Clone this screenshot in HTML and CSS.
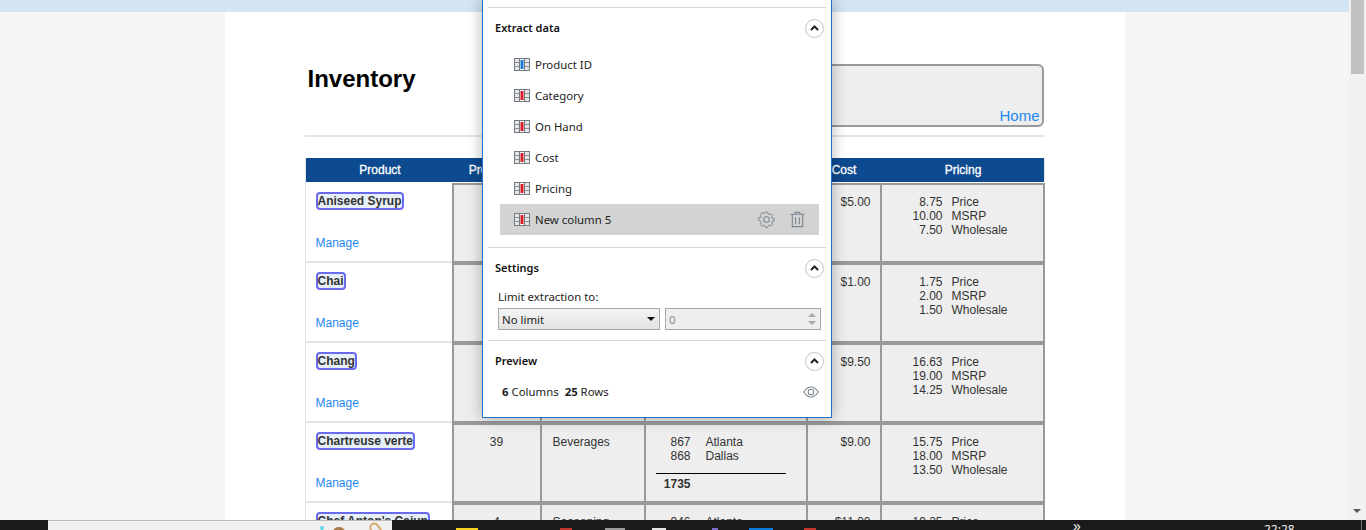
FILE: index.html
```html
<!DOCTYPE html>
<html>
<head>
  <title>Inventory</title>
  <link rel="stylesheet" href="styles.css">
</head>
<body>

<svg class="defs" width="0" height="0">
  <symbol id="col-icon" viewBox="0 0 16 13">
    <rect x="0.5" y="0.5" width="15" height="12" fill="#e4e6e8" stroke="#767b82"/>
    <rect x="5" y="1" width="6" height="11" fill="#fff"/>
    <path d="M1 4.500H5M1 8.500H5M11 4.500H15M11 8.500H15" stroke="#8d9197"/>
    <path d="M5.500 1V12M10.500 1V12" stroke="#767b82"/>
    <rect x="6.500" y="2" width="3" height="9" fill="currentColor"/>
  </symbol>
  <symbol id="chevron" viewBox="0 0 19 19">
    <circle cx="9.500" cy="9.500" r="9" fill="#fff" stroke="#c4c4c4"/>
    <path d="M6 11L9.500 7.500L13 11" fill="none" stroke="#222" stroke-width="2"/>
  </symbol>
</svg>

<div class="screen">
  <div class="viewport">
    <div class="page-scroll">
      <div class="top-bar"></div>
      <div class="sheet">
        <div class="head">
          <h1>Inventory</h1>
          <div class="head-box"><a href="#">Home</a></div>
        </div>
        <hr class="head-rule">

        <table class="inventory">
          <colgroup>
            <col class="c-product"><col class="c-id"><col class="c-cat"><col class="c-hand"><col class="c-cost"><col class="c-price">
          </colgroup>
          <thead>
            <tr><th>Product</th><th>Product ID</th><th>Category</th><th>On Hand</th><th>Cost</th><th>Pricing</th></tr>
          </thead>
          <tbody>
            <tr>
              <td class="name"><span class="pill">Aniseed Syrup</span><a class="manage" href="#">Manage</a></td>
              <td class="data center">3</td>
              <td class="data cat">Condiments</td>
              <td class="data hand">
                <div class="stock"><span>13</span><span>Atlanta</span></div>
                <div class="total"><b>13</b></div>
              </td>
              <td class="data cost">$5.00</td>
              <td class="data price">
                <div class="tier"><span>8.75</span><span>Price</span></div>
                <div class="tier"><span>10.00</span><span>MSRP</span></div>
                <div class="tier"><span>7.50</span><span>Wholesale</span></div>
              </td>
            </tr>
            <tr>
              <td class="name"><span class="pill">Chai</span><a class="manage" href="#">Manage</a></td>
              <td class="data center">1</td>
              <td class="data cat">Beverages</td>
              <td class="data hand">
                <div class="stock"><span>39</span><span>Atlanta</span></div>
                <div class="total"><b>39</b></div>
              </td>
              <td class="data cost">$1.00</td>
              <td class="data price">
                <div class="tier"><span>1.75</span><span>Price</span></div>
                <div class="tier"><span>2.00</span><span>MSRP</span></div>
                <div class="tier"><span>1.50</span><span>Wholesale</span></div>
              </td>
            </tr>
            <tr>
              <td class="name"><span class="pill">Chang</span><a class="manage" href="#">Manage</a></td>
              <td class="data center">2</td>
              <td class="data cat">Beverages</td>
              <td class="data hand">
                <div class="stock"><span>17</span><span>Atlanta</span></div>
                <div class="total"><b>17</b></div>
              </td>
              <td class="data cost">$9.50</td>
              <td class="data price">
                <div class="tier"><span>16.63</span><span>Price</span></div>
                <div class="tier"><span>19.00</span><span>MSRP</span></div>
                <div class="tier"><span>14.25</span><span>Wholesale</span></div>
              </td>
            </tr>
            <tr>
              <td class="name"><span class="pill">Chartreuse verte</span><a class="manage" href="#">Manage</a></td>
              <td class="data center">39</td>
              <td class="data cat">Beverages</td>
              <td class="data hand">
                <div class="stock"><span>867</span><span>Atlanta</span></div>
                <div class="stock"><span>868</span><span>Dallas</span></div>
                <div class="total"><b>1735</b></div>
              </td>
              <td class="data cost">$9.00</td>
              <td class="data price">
                <div class="tier"><span>15.75</span><span>Price</span></div>
                <div class="tier"><span>18.00</span><span>MSRP</span></div>
                <div class="tier"><span>13.50</span><span>Wholesale</span></div>
              </td>
            </tr>
            <tr>
              <td class="name"><span class="pill">Chef Anton's Cajun</span><a class="manage" href="#">Manage</a></td>
              <td class="data center">4</td>
              <td class="data cat">Seasoning</td>
              <td class="data hand">
                <div class="stock"><span>946</span><span>Atlanta</span></div>
              </td>
              <td class="data cost">$11.00</td>
              <td class="data price">
                <div class="tier"><span>19.25</span><span>Price</span></div>
              </td>
            </tr>
          </tbody>
        </table>
      </div>

      <div class="panel">
        <section class="section first">
          <div class="section-head">
            <span>Extract data</span>
            <svg class="toggle"><use href="#chevron"/></svg>
          </div>
          <ul class="columns">
            <li><svg class="col-icon key"><use href="#col-icon"/></svg>Product ID</li>
            <li><svg class="col-icon"><use href="#col-icon"/></svg>Category</li>
            <li><svg class="col-icon"><use href="#col-icon"/></svg>On Hand</li>
            <li><svg class="col-icon"><use href="#col-icon"/></svg>Cost</li>
            <li><svg class="col-icon"><use href="#col-icon"/></svg>Pricing</li>
            <li class="selected">
              <svg class="col-icon"><use href="#col-icon"/></svg>New column 5
              <span class="row-tools">
                <svg class="tool" viewBox="0 0 18 18" fill="none" stroke="#7d8790" stroke-width="1.100">
                  <path d="M7.600 1.500h2.800l.4 2.200 1.300.6 1.900-1.200 2 2-1.200 1.900.5 1.300 2.200.4v2.800l-2.200.4-.5 1.300 1.200 1.900-2 2-1.900-1.200-1.300.5-.4 2.200H7.600l-.4-2.200-1.300-.5-1.900 1.200-2-2 1.200-1.900-.5-1.300L.5 10.400V7.600l2.200-.4.5-1.300L2 4l2-2 1.900 1.200 1.300-.5z" transform="translate(.4 -.2) scale(.95)"/>
                  <circle cx="9" cy="9" r="3"/>
                </svg>
                <svg class="tool" viewBox="0 0 18 18" fill="none" stroke="#7d8790" stroke-width="1.200">
                  <path d="M1.500 3.500H16.500M6.500 3.500V1.500H11.500V3.500M3.500 3.500V16.500H14.500V3.500M7 6.500V14M11 6.500V14"/>
                </svg>
              </span>
            </li>
          </ul>
        </section>

        <section class="section">
          <div class="section-head">
            <span>Settings</span>
            <svg class="toggle"><use href="#chevron"/></svg>
          </div>
          <div class="limit-label">Limit extraction to:</div>
          <div class="limit-row">
            <div class="limit-select">No limit<span class="caret"></span></div>
            <div class="limit-number">0
              <span class="spin"><i class="up"></i><i class="down"></i></span>
            </div>
          </div>
        </section>

        <section class="section">
          <div class="section-head">
            <span>Preview</span>
            <svg class="toggle"><use href="#chevron"/></svg>
          </div>
          <div class="summary">
            <span><b>6</b> Columns&nbsp; <b>25</b> Rows</span>
            <svg class="eye" viewBox="0 0 16 12" fill="none" stroke="#7d8790" stroke-width="1.100">
              <path d="M.7 6C3 2.600 5.400 1 8 1s5 1.600 7.300 5C13 9.400 10.600 11 8 11S3 9.400.7 6z"/>
              <circle cx="8" cy="6" r="2.800"/>
            </svg>
          </div>
        </section>
      </div>
    </div>

    <div class="scrollbar">
      <div class="thumb"></div>
      <div class="arrow-down"></div>
    </div>
  </div>

  <div class="taskbar">
    <div class="task-window">
      <span class="dot"></span>
      <span class="clip-a"></span>
      <span class="clip-b"></span>
    </div>
    <span class="tray t-yellow"></span>
    <span class="tray t-red"></span>
    <span class="tray t-grey"></span>
    <span class="tray t-light"></span>
    <span class="tray t-purple"></span>
    <span class="tray t-blue"></span>
    <span class="tray t-red2"></span>
    <span class="more">»</span>
    <span class="clock">22:28</span>
    <span class="show-desktop"></span>
  </div>
</div>

</body>
</html>
```

FILE: styles.css
```css
* {
  box-sizing: border-box;
}
html, body {
  margin: 0;
  height: 530px;
  overflow: hidden;
}
body {
  font-family: "Liberation Sans", Arial, sans-serif;
  font-size: 12px;
  color: #333;
  background-color: #f5f5f5;
}
a {
  color: #1e88f0;
  text-decoration: none;
}
.defs {
  position: absolute;
}
.screen {
  display: flex;
  flex-direction: column;
  height: 530px;
}
.viewport {
  display: flex;
  height: 520px;
  overflow: hidden;
}
.page-scroll {
  position: relative;
  width: 1349px;
  overflow: hidden;
}
.top-bar {
  height: 12px;
  background-color: #d3e5f2;
}

/* page sheet */
.sheet {
  width: 900px;
  margin: 0 auto;
  padding: 0 80px;
  height: 700px;
  background-color: #fff;
}
.head {
  display: flex;
  justify-content: space-between;
  align-items: flex-start;
  padding-top: 52px;
  height: 123px;
}
.head h1 {
  margin: 0 0 0 3px;
  font-size: 24px;
  line-height: 30px;
  color: #000;
}
.head-box {
  display: flex;
  justify-content: flex-end;
  align-items: flex-end;
  width: 500px;
  height: 63px;
  margin-right: 1px;
  padding-right: 2px;
  padding-bottom: 1px;
  background-color: #eee;
  border: 2px solid #999;
  border-radius: 6px;
}
.head-box a {
  font-size: 15px;
  line-height: 17px;
}
.head-rule {
  height: 2px;
  margin: 0;
  border: none;
  background-color: #e5e5e5;
}

/* table */
.inventory {
  width: 740px;
  margin-top: 21px;
  table-layout: fixed;
  border-collapse: separate;
  border-spacing: 0;
}
.c-product { width: 147px; }
.c-id { width: 88px; }
.c-cat { width: 104px; }
.c-hand { width: 162px; }
.c-cost { width: 74px; }
.c-price { width: 165px; }
.inventory th {
  height: 25px;
  padding: 0 0 1px;
  color: #fff;
  font-size: 12px;
  font-weight: normal;
  text-indent: 3px;
  -webkit-text-stroke: 0.3px #fff;
  background-color: #0d4a90;
  background-clip: content-box;
  border-left: 1px solid #e5e5e5;
}
.inventory th + th {
  border-left: none;
}
.inventory th:last-child {
  border-right: 1px solid #e5e5e5;
}
.inventory tbody tr {
  height: 80px;
}
.inventory td {
  vertical-align: top;
  line-height: 14px;
}
.name {
  padding: 9px 0 0 10px;
  border-left: 1px solid #e5e5e5;
  border-bottom: 2px solid #e5e5e5;
}
.pill {
  display: inline-block;
  height: 18px;
  font-weight: bold;
  line-height: 14px;
  white-space: nowrap;
  background-color: #e6f0f6;
  border: 2px solid #6a6aee;
  border-radius: 4px;
}
.manage {
  display: block;
  margin-top: 26px;
}
.data {
  padding: 10px 0 0;
  background-color: #eee;
  border: 2px solid #999;
  border-right: none;
}
.data:last-child {
  border-right: 2px solid #999;
}
.center {
  text-align: center;
}
.cat {
  padding-left: 11px;
}
.hand {
  padding-left: 10px;
}
.stock {
  display: grid;
  grid-template-columns: 35px 1fr;
  column-gap: 15px;
  width: 130px;
}
.stock span:first-child, .tier span:first-child {
  text-align: right;
}
.total {
  width: 130px;
  margin-top: 10px;
  padding: 3px 0 0;
  border-top: 1px solid #000;
}
.total b {
  display: block;
  width: 35px;
  text-align: right;
}
.cost {
  padding-right: 9px;
  text-align: right;
}
.tier {
  display: grid;
  grid-template-columns: 61px 1fr;
  column-gap: 9px;
}

/* extraction panel */
.panel {
  position: absolute;
  left: 482px;
  top: -1px;
  width: 350px;
  height: 419px;
  padding: 0 5px;
  font-family: "Noto Sans", sans-serif;
  font-size: 11.4px;
  color: #222;
  background-color: #fff;
  border: 1px solid #1b74c9;
  box-shadow: 0 0 14px rgba(0, 0, 0, 0.3);
}
.section {
  border-top: 1px solid #d5d5d5;
}
.section.first {
  margin-top: 7px;
  height: 240px;
}
.section-head {
  display: flex;
  justify-content: space-between;
  align-items: center;
  height: 40px;
  padding: 0 2px 0 7px;
  font-size: 11px;
  font-weight: 600;
  color: #111;
}
.section-head span {
  margin-bottom: 2px;
}
.toggle {
  width: 19px;
  height: 19px;
}
.columns {
  list-style: none;
  margin: 1px 7px 0 12px;
  padding: 0;
}
.columns li {
  display: flex;
  align-items: center;
  height: 31px;
  padding-left: 14px;
}
.col-icon {
  width: 16px;
  height: 13px;
  margin-right: 5px;
  color: #d8202c;
}
.col-icon.key {
  color: #1a7ad8;
}
.columns .selected {
  background-color: #d3d3d3;
}
.row-tools {
  display: flex;
  gap: 14px;
  margin-left: auto;
  padding-right: 13px;
}
.tool {
  width: 17px;
  height: 17px;
}
.limit-label {
  margin: 1px 0 3px 10px;
  line-height: 16px;
}
.limit-row {
  display: flex;
  gap: 5px;
  height: 22px;
  margin: 0 5px 10px 10px;
}
.limit-select, .limit-number {
  position: relative;
  padding-left: 3px;
  line-height: 21px;
  border: 1px solid #a8a8a8;
}
.limit-select {
  width: 162px;
  background: linear-gradient(#f4f4f4, #e2e2e2);
}
.limit-number {
  flex: 1;
  color: #888;
  background-color: #eee;
}
.caret {
  position: absolute;
  right: 4px;
  top: 8px;
  border-left: 4px solid transparent;
  border-right: 4px solid transparent;
  border-top: 4px solid #111;
}
.spin i {
  position: absolute;
  right: 4px;
  border-left: 4px solid transparent;
  border-right: 4px solid transparent;
}
.spin .up {
  top: 4px;
  border-bottom: 4px solid #aaa;
}
.spin .down {
  top: 12px;
  border-top: 4px solid #aaa;
}
.summary {
  display: flex;
  justify-content: space-between;
  align-items: center;
  margin-top: 1px;
  padding: 0 7px 0 14px;
  line-height: 20px;
}
.summary b {
  font-weight: 700;
}
.eye {
  width: 16px;
  height: 12px;
}

/* scrollbar */
.scrollbar {
  position: relative;
  width: 17px;
  background-color: #f1f1f1;
}
.thumb {
  width: 13px;
  height: 74px;
  margin-left: 2px;
  background-color: #c1c1c1;
}
.arrow-down {
  position: absolute;
  left: 4px;
  bottom: 7px;
  border-left: 4px solid transparent;
  border-right: 4px solid transparent;
  border-top: 4px solid #555;
}

/* taskbar, only its top edge is on screen */
.taskbar {
  position: relative;
  height: 10px;
  overflow: hidden;
  background-color: #1a1a1a;
}
.task-window {
  position: absolute;
  left: 48px;
  top: 0;
  width: 344px;
  height: 10px;
  background-color: #f0f0f0;
  border-top: 1px solid #bbb;
}
.dot {
  position: absolute;
  left: 272px;
  top: 5px;
  width: 4px;
  height: 4px;
  border-radius: 50%;
  background-color: #5fd8ee;
}
.clip-a {
  position: absolute;
  left: 285px;
  top: 6px;
  width: 12px;
  height: 10px;
  border-radius: 50%;
  background-color: #a77b4c;
}
.clip-b {
  position: absolute;
  left: 323px;
  top: 1px;
  width: 10px;
  height: 16px;
  border: 2px solid #d6a96e;
  border-radius: 5px;
  transform: rotate(-35deg);
}
.tray {
  position: absolute;
  top: 8px;
  height: 2px;
}
.t-yellow { left: 456px; width: 22px; background-color: #f4d21f; }
.t-red { left: 560px; width: 12px; background-color: #c2352b; }
.t-grey { left: 605px; width: 20px; background-color: #9a9a9a; }
.t-light { left: 652px; width: 14px; background-color: #e4e4e4; }
.t-purple { left: 712px; width: 6px; background-color: #7a6cc8; }
.t-blue { left: 749px; width: 24px; background-color: #0a78d8; }
.t-red2 { left: 804px; width: 12px; background-color: #c2352b; }
.more {
  position: absolute;
  left: 1073px;
  top: 0;
  font-size: 14px;
  line-height: 12px;
  color: #fff;
}
.clock {
  position: absolute;
  left: 1264px;
  top: 3px;
  font-family: "Noto Sans", sans-serif;
  font-size: 12px;
  line-height: 14px;
  color: #eee;
}
.show-desktop {
  position: absolute;
  left: 1361px;
  top: 0;
  width: 1px;
  height: 10px;
  background-color: #777;
}
```
